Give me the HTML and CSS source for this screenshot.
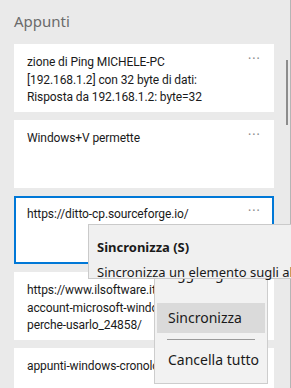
FILE: index.html
```html
<!DOCTYPE html>
<html lang="it">
<head>
    <meta charset="UTF-8">
    <title>Appunti</title>
    <link rel="stylesheet" href="styles.css">
</head>
<body>
    <div class="panel">
        <h1 class="title">Appunti</h1>

        <div class="list">
            <div class="card">
                <div class="text">zione di Ping MICHELE-PC<br>[192.168.1.2] con 32 byte di dati:<br>Risposta da 192.168.1.2: byte=32</div>
                <div class="dots">&middot;&middot;&middot;</div>
            </div>
            <div class="card">
                <div class="text">Windows+V permette</div>
                <div class="dots">&middot;&middot;&middot;</div>
            </div>
            <div class="card selected">
                <div class="text">https://ditto-cp.sourceforge.io/</div>
                <div class="dots">&middot;&middot;&middot;</div>
            </div>
            <div class="card">
                <div class="text">https://www.ilsoftware.it/articoli<br>account-microsoft-windows-10-<br>perche-usarlo_24858/</div>
                <div class="dots">&middot;&middot;&middot;</div>
            </div>
            <div class="card">
                <div class="text">appunti-windows-cronologia</div>
                <div class="dots">&middot;&middot;&middot;</div>
            </div>
        </div>

        <div class="scrollbar"></div>
    </div>

    <!-- context menu of the selected item -->
    <div class="menu">
        <div class="menu-item first">Aggiungi</div>
        <div class="menu-item active">Sincronizza</div>
        <div class="menu-sep"></div>
        <div class="menu-item">Cancella tutto</div>
    </div>

    <div class="tooltip">
        <div class="tip-title">Sincronizza (S)</div>
        <div class="tip-text">Sincronizza un elemento sugli altri dispositivi</div>
    </div>
</body>
</html>
```

FILE: styles.css
```css
body {
    margin: 0;
    width: 291px;
    height: 388px;
    overflow: hidden;
    position: relative;
    background-color: #ebebeb;
    font-family: "Noto Sans", sans-serif;
    color: #1a1a1a;
}

.panel {
    position: relative;
    height: 388px;
    box-sizing: border-box;
    padding: 0 16px 0 14px;
    border-right: 1px solid #b5b5b5;
    background-color: #eaeaea;
    overflow: hidden;
}

.title {
    margin: 0;
    padding-top: 11px;
    height: 33px;
    font-size: 15px;
    font-weight: normal;
    color: #6b6b6b;
    line-height: 20px;
}

.list {
    display: flex;
    flex-direction: column;
    gap: 8px;
}

.card {
    display: flex;
    flex-shrink: 0;
    height: 68px;
    box-sizing: border-box;
    padding: 10px 12px 0 13px;
    background: #fff;
    overflow: hidden;
}

.card.selected {
    border: 2px solid #0078d7;
    padding: 8px 10px 0 11px;
}

.text {
    flex-grow: 1;
    font-family: Roboto, "Noto Sans", sans-serif;
    font-size: 12px;
    letter-spacing: -0.1px;
    line-height: 17.5px;
    white-space: nowrap;
    overflow: hidden;
}

.dots {
    width: 14px;
    margin-top: -1px;
    font-size: 12px;
    line-height: 12px;
    color: #8a8a8a;
    letter-spacing: 1px;
}

/* fake scroll thumb */
.scrollbar {
    position: absolute;
    right: 2px;
    top: 60px;
    width: 2px;
    height: 65px;
    background: #8c8c8c;
}

.menu {
    position: absolute;
    left: 154px;
    top: 228px;
    width: 108px;
    height: 150px;
    padding: 2px;
    background: #f2f2f2;
    border: 1px solid #cdcdcd;
    font-size: 14px;
}

.menu-item {
    height: 30px;
    line-height: 30px;
    padding-left: 11px;
}

.menu-item.first {
    margin-top: 28px;
    margin-bottom: 14px;
}

.menu-item.active {
    background: #dadada;
}

.menu-sep {
    height: 1px;
    margin: 6px 10px 5px;
    background: #9a9a9a;
}

.tooltip {
    position: absolute;
    left: 88px;
    top: 224px;
    width: 240px;
    height: 53px;
    padding: 0 8px;
    background: #f0f0f0;
    border: 1px solid #cacaca;
    font-size: 13px;
    white-space: nowrap;
}

.tip-title {
    font-weight: bold;
    margin-top: 13px;
    line-height: 18px;
}

.tip-text {
    margin-top: 7px;
    line-height: 18px;
}
```
